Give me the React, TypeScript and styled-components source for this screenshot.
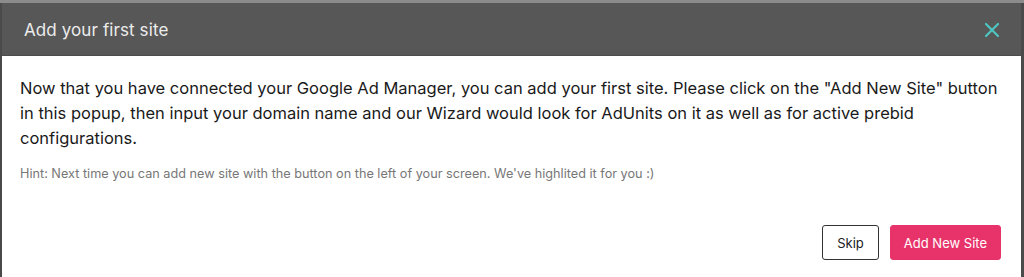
import React from 'react'
import { type ReactElement } from 'react'
import styled, { createGlobalStyle } from 'styled-components'

const GlobalStyle = createGlobalStyle`
html, body {
  margin: 0;
  padding: 0;
  background: #5e5e5e;
  height: 277px;
  overflow: hidden;
}
body {
  font-family: 'Inter', 'Open Sans', Arial, sans-serif;
}
`

const Backdrop = styled.div`
height: 277px;
box-sizing: border-box;
padding: 3px 3px 0 2px;
background: linear-gradient(#8c8c8c 0 3px, #4a4a4a 3px);
`

const Modal = styled.div`
height: 100%;
display: flex;
flex-direction: column;
background: #fff;
`

const ModalHeader = styled.div`
height: 53px;
box-sizing: border-box;
background: #575757;
display: flex;
align-items: center;
justify-content: space-between;
padding: 2px 18px 0 22px;
border-bottom: 1px solid #4c4c4c;
`

const Title = styled.h2`
margin: 0;
font-size: 17px;
font-weight: 400;
color: #ececec;
letter-spacing: 0.1px;
`

const CloseButton = styled.button`
border: 0;
background: none;
padding: 0;
width: 22px;
height: 22px;
display: flex;
align-items: center;
justify-content: center;
cursor: pointer;
`

const ModalBody = styled.div`
flex: 1;
padding: 20px 16px 0 18px;
`

const Message = styled.p`
margin: 0;
font-size: 16.5px;
line-height: 25px;
color: #1a1a1a;
`

const Hint = styled.p`
margin: 15px 0 0;
font-size: 12.7px;
color: #777;
`

const Footer = styled.div`
display: flex;
justify-content: flex-end;
gap: 11px;
padding: 0 20px 17px 0;
`

const Button = styled.button<{ $primary?: boolean }>`
height: 35px;
box-sizing: border-box;
padding: 0 ${p => p.$primary ? '13px' : '14px'};
font-family: inherit;
font-size: 13px;
border-radius: 3px;
cursor: pointer;
border: 1px solid ${p => p.$primary ? '#e8336a' : '#333'};
background: ${p => p.$primary ? '#e8336a' : '#fff'};
color: ${p => p.$primary ? '#fff' : '#222'};
`

export default function App (): ReactElement {
  return (
    <>
      <GlobalStyle />
      <Backdrop>
        <Modal>
          <ModalHeader>
            <Title>Add your first site</Title>
            <CloseButton aria-label="Close">
              <svg width="16" height="16" viewBox="0 0 16 16">
                <path d="M2 2 L14 14 M14 2 L2 14" stroke="#4ec5c1" strokeWidth="2.2" strokeLinecap="round" />
              </svg>
            </CloseButton>
          </ModalHeader>
          <ModalBody>
            <Message>
              Now that you have connected your Google Ad Manager, you can add your first site. Please click on the "Add New Site" button in this popup, then input your domain name and our Wizard would look for AdUnits on it as well as for active prebid configurations.
            </Message>
            <Hint>Hint: Next time you can add new site with the button on the left of your screen. We've highlited it for you :)</Hint>
          </ModalBody>
          <Footer>
            <Button>Skip</Button>
            <Button $primary>Add New Site</Button>
          </Footer>
        </Modal>
      </Backdrop>
    </>
  )
}
